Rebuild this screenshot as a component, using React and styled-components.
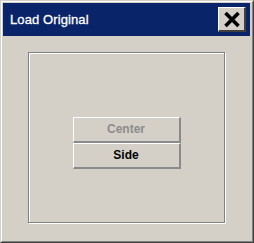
import React from "react";
import styled, { createGlobalStyle } from "styled-components";

const GlobalStyle = createGlobalStyle`
  html, body {
    margin: 0;
    padding: 0;
    background: #d4d0c8;
  }
  body {
    font-family: "Liberation Sans", Arial, sans-serif;
  }
`;

const Frame = styled.div`
  width: 254px;
  height: 243px;
  box-sizing: border-box;
  border-style: solid;
  border-width: 1px;
  border-color: #d4d0c8 #404040 #404040 #d4d0c8;
  background: #d4d0c8;
`;

const Inner = styled.div`
  height: 100%;
  box-sizing: border-box;
  border-style: solid;
  border-width: 1px;
  border-color: #ffffff #808080 #808080 #ffffff;
  padding: 1px 2px 1px 1px;
  display: flex;
  flex-direction: column;
`;

const TitleBar = styled.div`
  height: 33px;
  flex-shrink: 0;
  background: #0a246a;
  display: flex;
  align-items: center;
  justify-content: space-between;
  padding: 0 4px 0 7px;
`;

const Title = styled.span`
  color: #ffffff;
  font-size: 13px;
  font-weight: normal;
  letter-spacing: 0.1px;
  -webkit-text-stroke: 0.3px #ffffff;
`;

const CloseButton = styled.div`
  width: 28px;
  height: 25px;
  box-sizing: border-box;
  background: #d4d0c8;
  border-style: solid;
  border-width: 1px 2px 2px 1px;
  border-color: #ffffff #404040 #404040 #ffffff;
  display: flex;
  align-items: center;
  justify-content: center;
`;

const Body = styled.div`
  flex: 1;
  display: flex;
  padding: 16px 25px 17px 25px;
`;

const Panel = styled.div`
  flex: 1;
  box-sizing: border-box;
  border: 1px solid #808080;
  box-shadow: inset 1px 1px 0 #ffffff, 1px 1px 0 #ffffff;
  display: flex;
  flex-direction: column;
  align-items: center;
  justify-content: center;
  padding-top: 10px;
`;

const Option = styled.div`
  width: 108px;
  height: 26px;
  box-sizing: border-box;
  border-style: solid;
  border-width: 1px 2px 2px 1px;
  border-color: #ffffff #8a8a8a #8a8a8a #ffffff;
  display: flex;
  align-items: center;
  justify-content: center;
  font-size: 12px;
  font-weight: bold;
  color: ${(p) => (p.disabled ? "#8c8c8c" : "#000000")};
`;

const CloseIcon = () => (
  <svg width="18" height="17" viewBox="0 0 18 17">
    <path d="M2.5 2 L15.5 15 M15.5 2 L2.5 15" stroke="#000" strokeWidth="3.6" strokeLinecap="butt" />
  </svg>
);

const App = () => {
  return (
    <>
      <GlobalStyle />
      <Frame>
        <Inner>
          <TitleBar>
            <Title>Load Original</Title>
            <CloseButton>
              <CloseIcon />
            </CloseButton>
          </TitleBar>
          <Body>
            <Panel>
              <Option disabled>Center</Option>
              <Option>Side</Option>
            </Panel>
          </Body>
        </Inner>
      </Frame>
    </>
  );
};

export default App;
